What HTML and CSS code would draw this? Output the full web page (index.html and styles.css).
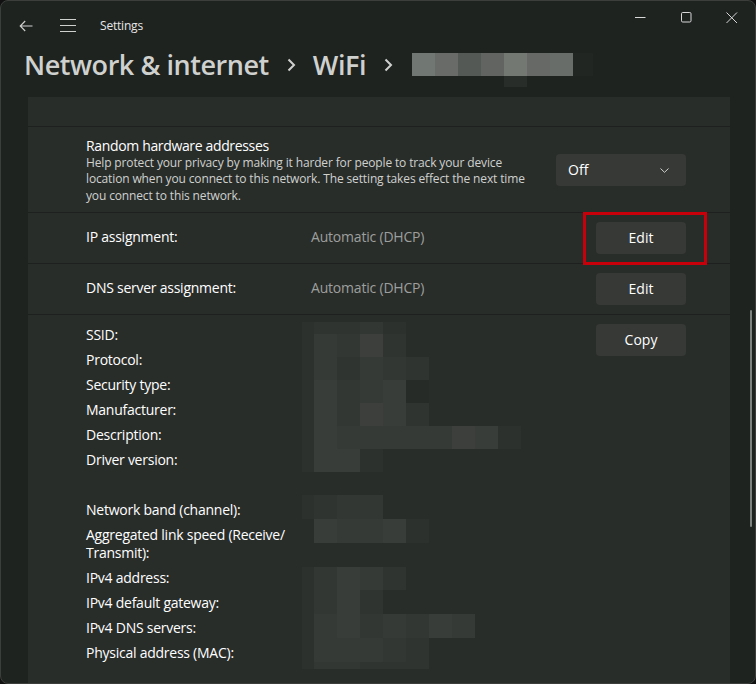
FILE: index.html
```html
<!DOCTYPE html>
<html lang="en">
<head>
<meta charset="utf-8">
<title>Settings</title>
<link rel="stylesheet" href="styles.css">
</head>
<body>
<div class="window">
  <div class="titlebar">
    <div class="tb-left">
      <svg class="ic-back" width="14" height="12" viewBox="0 0 14 12"><path d="M13.5 6H1.2M6.2 1L1.2 6l5 5" fill="none" stroke="#cfd1cf" stroke-width="1.1"/></svg>
      <svg class="ic-menu" width="16" height="13" viewBox="0 0 16 13"><path d="M0 0.5H16M0 6.5H16M0 12.5H16" fill="none" stroke="#cfd1cf" stroke-width="1.1"/></svg>
      <span class="app-title">Settings</span>
    </div>
    <div class="tb-controls">
      <div class="ctl"><svg width="11" height="11" viewBox="0 0 11 11"><path d="M0 5.5H10.5" stroke="#d8d8d8" stroke-width="1"/></svg></div>
      <div class="ctl"><svg width="11" height="11" viewBox="0 0 11 11"><rect x="0.5" y="0.5" width="9.5" height="9.5" rx="1.2" fill="none" stroke="#d8d8d8" stroke-width="1"/></svg></div>
      <div class="ctl"><svg width="12" height="12" viewBox="0 0 12 12"><path d="M0.5 0.5L11 11M11 0.5L0.5 11" stroke="#d8d8d8" stroke-width="1"/></svg></div>
    </div>
  </div>

  <div class="header">
    <span class="crumb">Network &amp; internet</span>
    <svg class="chev" width="9" height="14" viewBox="0 0 9 14"><path d="M1.5 1.5L7 7l-5.5 5.5" fill="none" stroke="#cfd1cf" stroke-width="2"/></svg>
    <span class="crumb">WiFi</span>
    <svg class="chev" width="9" height="14" viewBox="0 0 9 14"><path d="M1.5 1.5L7 7l-5.5 5.5" fill="none" stroke="#cfd1cf" stroke-width="2"/></svg>
    <div class="hmosaic">
      <div class="hrow">
        <i class="h1"></i><i class="h2"></i><i class="h3"></i><i class="h4"></i><i class="h5"></i><i class="h6"></i><i class="h7"></i><i class="h8"></i>
      </div>
      <div class="hrow hrow2">
        <i class="hx"></i><i class="hx"></i><i class="hx"></i><i class="hx"></i><i class="h9"></i>
      </div>
    </div>
  </div>

  <div class="body">
    <div class="card">
      <div class="sec sec-top"></div>

      <div class="sec row rand">
        <div class="rand-text">
          <div class="rand-title">Random hardware addresses</div>
          <div class="rand-desc">Help protect your privacy by making it harder for people to track your device location when you connect to this network. The setting takes effect the next time you connect to this network.</div>
        </div>
        <div class="dropdown">
          <span>Off</span>
          <svg width="9" height="5" viewBox="0 0 9 5"><path d="M0.5 0.5L4.5 4.3 8.5 0.5" fill="none" stroke="#cfd1cf" stroke-width="1"/></svg>
        </div>
      </div>

      <div class="sec row kv">
        <span class="k">IP assignment:</span>
        <span class="v">Automatic (DHCP)</span>
        <div class="btn-wrap highlight"><div class="btn">Edit</div></div>
      </div>

      <div class="sec row kv">
        <span class="k">DNS server assignment:</span>
        <span class="v">Automatic (DHCP)</span>
        <div class="btn-wrap"><div class="btn">Edit</div></div>
      </div>

      <div class="sec props">
        <div class="labels">
          <div>SSID:</div>
          <div>Protocol:</div>
          <div>Security type:</div>
          <div>Manufacturer:</div>
          <div>Description:</div>
          <div>Driver version:</div>
          <div class="blank">&nbsp;</div>
          <div>Network band (channel):</div>
          <div>Aggregated link speed (Receive/ Transmit):</div>
          <div>IPv4 address:</div>
          <div>IPv4 default gateway:</div>
          <div>IPv4 DNS servers:</div>
          <div>Physical address (MAC):</div>
        </div>
        <div class="values">
          <div class="mosaic m1">
            <i class="s1"></i><i class="s2"></i><i class="s2"></i><i class="s3"></i><i class="s1"></i><i></i><i></i><i></i><i></i><i></i><i></i>
            <i class="s1"></i><i class="s4"></i><i class="s3"></i><i class="s6"></i><i class="s2"></i><i></i><i></i><i></i><i></i><i></i><i></i>
            <i class="s1"></i><i class="s4"></i><i class="s2"></i><i class="s4"></i><i class="s3"></i><i class="s2"></i><i></i><i></i><i></i><i></i><i></i>
            <i class="s1"></i><i class="s5"></i><i class="s3"></i><i class="s4"></i><i class="s5"></i><i class="s0d"></i><i></i><i></i><i></i><i></i><i></i>
            <i class="s1"></i><i class="s5"></i><i class="s3"></i><i class="s6"></i><i class="s5"></i><i class="s2"></i><i></i><i></i><i></i><i></i><i></i>
            <i class="s1"></i><i class="s5"></i><i class="s4"></i><i class="s4"></i><i class="s4"></i><i class="s4"></i><i class="s4"></i><i class="s6"></i><i class="s5"></i><i class="s1"></i><i></i>
            <i class="s1"></i><i class="s5"></i><i class="s5"></i><i class="s1"></i><i></i><i></i><i></i><i></i><i></i><i></i><i></i>
          </div>
          <div class="mosaic m2">
            <i class="s1"></i><i class="s2"></i><i class="s3"></i><i class="s3"></i><i></i><i></i>
            <i></i><i class="s5"></i><i class="s4"></i><i class="s4"></i><i class="s5"></i><i class="s1"></i>
          </div>
          <div class="mosaic m3">
            <i class="s1"></i><i class="s3"></i><i class="s5"></i><i class="s4"></i><i class="s2"></i><i></i><i></i><i></i>
            <i class="s1"></i><i class="s3"></i><i class="s5"></i><i class="s2"></i><i></i><i></i><i></i><i></i>
            <i class="s1"></i><i class="s4"></i><i class="s5"></i><i class="s3"></i><i class="s4"></i><i class="s3"></i><i class="s5"></i><i class="s4"></i>
            <i class="s1"></i><i class="s4"></i><i class="s4"></i><i class="s4"></i><i class="s3"></i><i class="s2"></i><i></i><i></i>
            <i class="s1"></i><i class="s3"></i><i class="s3"></i><i class="s2"></i><i class="s2"></i><i class="s2"></i><i></i><i></i>
          </div>
        </div>
        <div class="copy-col"><div class="btn">Copy</div></div>
      </div>
    </div>
    <div class="scrolltrack"><div class="thumb"></div></div>
  </div>
</div>
</body>
</html>
```

FILE: styles.css
```css
* { box-sizing: border-box; }
html, body { margin: 0; padding: 0; }
body {
  background: #111;
  width: 756px;
  height: 684px;
  overflow: hidden;
  font-family: "Segoe UI", "Open Sans", "Noto Sans", sans-serif;
  color: #ffffff;
}
.window {
  width: 756px;
  height: 684px;
  background: #1f2320;
  border: 1px solid #3b3e3b;
  border-radius: 8px;
  overflow: hidden;
  display: flex;
  flex-direction: column;
}
.titlebar {
  height: 47px;
  display: flex;
  align-items: flex-start;
  flex: none;
}
.tb-left {
  height: 49px;
  display: flex;
  align-items: center;
  padding-left: 18px;
}
.ic-back { display: block; }
.ic-menu { display: block; margin-left: 27px; }
.app-title {
  margin-left: 24px;
  font-size: 12px;
  color: #e6e6e6;
  letter-spacing: -0.2px;
}
.tb-controls {
  margin-left: auto;
  display: flex;
}
.ctl {
  width: 46px;
  height: 33px;
  display: flex;
  align-items: center;
  justify-content: center;
}
.ctl svg { display: block; }

.header {
  height: 49px;
  flex: none;
  display: flex;
  align-items: center;
  padding-left: 23px;
  padding-bottom: 16px;
}
.crumb {
  font-size: 27px;
  font-weight: 600;
  color: #cfd1cf;
  letter-spacing: -0.45px;
  line-height: 36px;
}
.chev { display: block; margin: 0 17px 0 18px; }
.hmosaic { display: flex; flex-direction: column; padding-top: 11px; margin-left: 2px; }
.hrow { display: flex; }
.hrow i { display: block; width: 23px; height: 23px; }
.hrow2 i { height: 11px; }
.h1 { background: #717772; }
.h2 { background: #686b68; }
.h3 { background: #545955; }
.h4 { background: #616461; }
.h5 { background: #737873; }
.h6 { background: #666966; }
.h7 { background: #686d69; }
.h8 { background: #222623; width: 20px !important; }
.h9 { background: #282d29; }
.hx { background: transparent; }

.body {
  flex: 1;
  display: flex;
  min-height: 0;
  padding-left: 27px;
}
.card {
  width: 702px;
  background: #292d2a;
  display: flex;
  flex-direction: column;
}
.sec { border-top: 1px solid #1d201e; }
.sec-top { border-top: none; height: 29px; }
.row {
  display: flex;
  align-items: center;
  padding-left: 58px;
  padding-right: 44px;
}
.rand { height: 86px; padding-top: 1px; }
.rand-text { width: 440px; }
.rand-title {
  font-size: 14px;
  line-height: 19px;
  color: #ffffff;
  letter-spacing: -0.35px;
}
.rand-desc {
  font-size: 12px;
  line-height: 16.5px;
  color: #cfd1cf;
  letter-spacing: -0.14px;
}
.dropdown {
  margin-left: auto;
  width: 130px;
  height: 32px;
  background: #363936;
  border-radius: 4px;
  display: flex;
  align-items: center;
  padding: 0 17px 1px 12px;
  font-size: 14px;
  color: #ffffff;
}
.dropdown svg { margin-left: auto; display: block; margin-top: 1px; }

.kv { height: 51px; }
.k { width: 225px; font-size: 14px; color: #ffffff; letter-spacing: -0.25px; line-height: 18px; padding-bottom: 2px; }
.v { font-size: 14px; color: #9d9f9d; letter-spacing: -0.2px; line-height: 18px; padding-bottom: 2px; }
.btn-wrap {
  margin-left: auto;
  width: 90px;
  height: 32px;
  position: relative;
}
.highlight::after {
  content: "";
  position: absolute;
  left: -13px;
  top: -10px;
  width: 124px;
  height: 53px;
  border: 3px solid #c8000a;
  box-sizing: border-box;
}
.btn {
  width: 90px;
  height: 32px;
  background: #363936;
  border-radius: 4px;
  display: flex;
  align-items: center;
  justify-content: center;
  font-size: 14px;
  color: #ffffff;
  padding-bottom: 2px;
}

.props {
  flex: 1;
  display: flex;
  padding-left: 58px;
  padding-right: 44px;
}
.labels {
  width: 216px;
  padding-top: 11px;
  display: flex;
  flex-direction: column;
  gap: 7px;
  font-size: 14px;
  line-height: 18px;
  color: #ffffff;
  letter-spacing: -0.25px;
}
.values {
  width: 294px;
  padding-top: 7px;
  display: flex;
  flex-direction: column;
}
.mosaic { display: grid; }
.mosaic i { display: block; }
.m1 {
  grid-template-columns: 12px repeat(10, 23px);
  grid-template-rows: 12px repeat(6, 23px);
}
.m2 {
  margin-top: 23px;
  grid-template-columns: 12px repeat(5, 23px);
  grid-template-rows: 24px 24px;
}
.m3 {
  margin-top: 24px;
  grid-template-columns: 12px repeat(7, 23px);
  grid-template-rows: 23px 24px 24px 24px 7px;
}
.s0d { background: #272b28; }
.s1 { background: #2d312e; }
.s2 { background: #303431; }
.s3 { background: #333734; }
.s4 { background: #363a37; }
.s5 { background: #393d3a; }
.s6 { background: #3d3f3c; }
.copy-col { margin-left: auto; padding-top: 9px; }

.scrolltrack {
  flex: 1;
  display: flex;
  justify-content: flex-end;
  padding-right: 3px;
  padding-top: 213px;
}
.thumb {
  width: 2px;
  height: 217px;
  background: #7f837f;
  border-radius: 1px;
}
```
